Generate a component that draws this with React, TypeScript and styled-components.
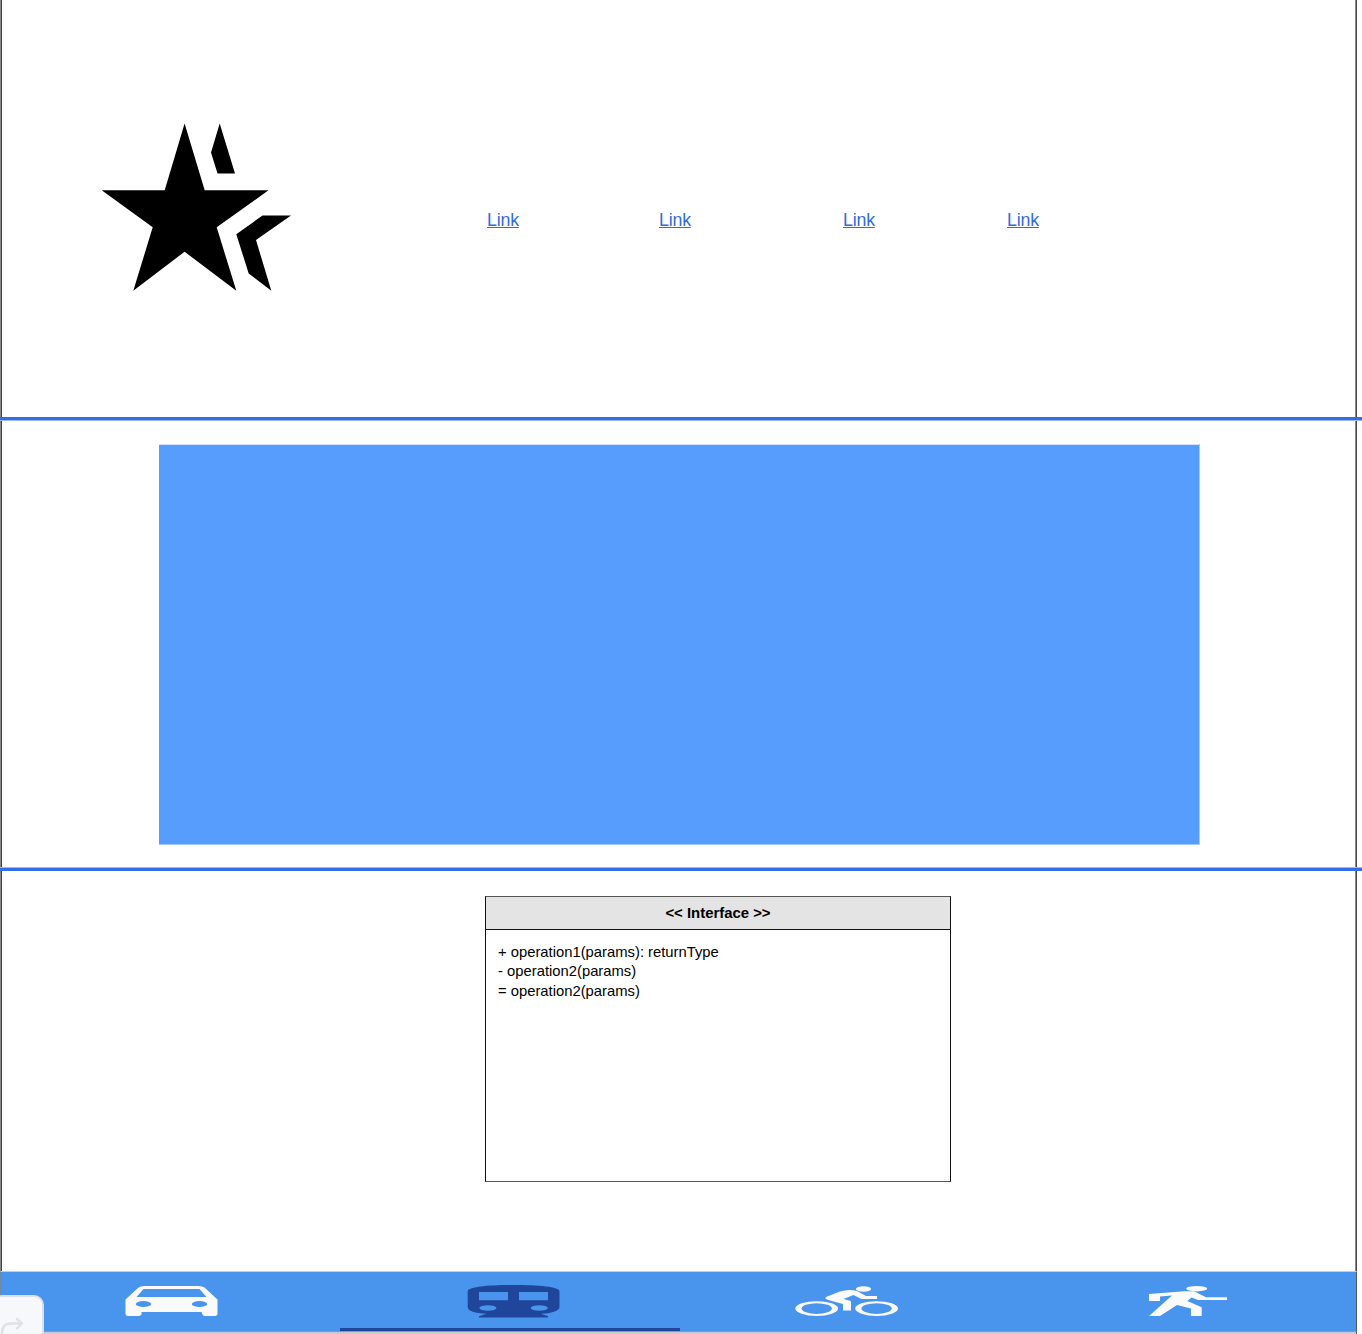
import React from 'react';
import styled, { createGlobalStyle } from 'styled-components';

const Global = createGlobalStyle`
  * { box-sizing: border-box; }
  body { margin: 0; background: #fff; overflow: hidden; }
`;

const Page = styled.div`
  position: relative;
  width: 1362px;
  height: 1334px;
  overflow: hidden;
  display: flex;
  flex-direction: column;
  background: #fff;
  color: #000;
  font-family: 'Liberation Sans', Arial, sans-serif;
`;

const Section = styled.section<{ $height: number }>`
  flex: none;
  display: flex;
  width: 1357px;
  height: ${(p) => p.$height}px;
  box-shadow: inset 1px 0 #888, inset 2px 0 #404040, inset -1px 0 #484848, inset -2px 0 #888;
`;

const Header = styled(Section)`
  align-items: flex-start;
`;

const HeroSection = styled(Section)`
  padding: 23px 0 0 159px;
`;

const DiagramSection = styled(Section)`
  padding: 25px 0 0 485px;
`;

const Rule = styled.div`
  flex: none;
  height: 4px;
  background: linear-gradient(#346de5 0 3px, #9ab9f2 3px 4px);
`;

const SoftRule = styled(Rule)`
  background: linear-gradient(#9ab9f2 0 1px, #346de5 1px 4px);
`;

const Logo = styled.svg`
  flex: none;
  margin: 115px 0 0 90px;
`;

const Nav = styled.nav`
  display: flex;
  margin: 210px 0 0 177px;
`;

const Link = styled.a<{ $gap: number }>`
  width: 32px;
  margin-right: ${(p) => p.$gap}px;
  font-size: 17.8px;
  letter-spacing: -0.2px;
  line-height: 20px;
  color: #2f6bdc;
  text-decoration: underline;
  text-decoration-thickness: 1px;
  text-underline-offset: 1px;
`;

const Hero = styled.div`
  width: 1041px;
  height: 401px;
  background: #579dfd;
  box-shadow: inset -1px 0 #a5cbfe, inset 0 1px #cfe3fe, inset 0 -1px #a5cbfe;
`;

const ClassBox = styled.article`
  width: 466px;
  height: 286px;
  border: 1px solid #111;
  border-top-color: #555;
  border-bottom-color: #555;
`;

const ClassTitle = styled.h2`
  height: 33px;
  margin: 0;
  border-bottom: 1px solid #111;
  background: #e4e4e4;
  text-align: center;
  font-size: 14.9px;
  line-height: 32px;
`;

const Operations = styled.ul`
  list-style: none;
  margin: 0;
  padding: 12.500px 12px;
`;

const Operation = styled.li`
  font-size: 14.8px;
  line-height: 19.6px;
`;

const TabBar = styled.nav`
  flex: none;
  display: grid;
  grid-template-columns: 339px 340px 339px 337px;
  width: 1357px;
  height: 60px;
  background: #4994ec;
  border-top: 1px solid #b5d2f5;
  border-right: 1px solid #48576a;
  border-left: 1px solid #718aa8;
`;

const Tab = styled.button<{ $active?: boolean }>`
  display: flex;
  justify-content: center;
  padding: 8px 0 0;
  border: 0;
  border-bottom: 3px solid ${(p) => (p.$active ? '#1f469b' : 'transparent')};
  background: none;
  color: ${(p) => (p.$active ? '#1f469b' : '#fafafa')};
`;

const Footer = styled.div`
  flex: none;
  width: 1357px;
  height: 3px;
  background: #cbcbcd;
  border-top: 1px solid #8198b5;
  border-right: 1px solid #555;
`;

const RedoPanel = styled.div`
  position: absolute;
  left: -8px;
  bottom: -8px;
  width: 52px;
  height: 47px;
  padding: 20px 0 0 6px;
  border: 2px solid #dcdfe7;
  border-radius: 10px;
  background: #f7f8fb;
`;

const links = [140, 152, 132, 0];

const operations = [
  '+ operation1(params): returnType',
  '- operation2(params)',
  '= operation2(params)',
];

const CarIcon = () => (
  <svg width="110" height="40" viewBox="115.5 1280 110 40" fill="currentColor">
    <path
      fillRule="evenodd"
      d="M125 1299.500L138 1287.500Q140 1286 144 1286H198Q202 1286 204 1287.500L217 1299.500V1314Q217 1316 213 1316H206Q202.500 1316 202 1314.500L201 1312H141V1314Q141 1316 136 1316H129Q125 1316 125 1314ZM143 1289L136 1297H206L199 1289ZM135.300 1304a7.700 3 0 1 0 15.400 0a7.700 3 0 1 0-15.400 0ZM191.300 1304a7.700 3 0 1 0 15.400 0a7.700 3 0 1 0-15.400 0Z"
    />
  </svg>
);

const TrainIcon = () => (
  <svg width="110" height="40" viewBox="455 1280 110 40" fill="currentColor">
    <path
      fillRule="evenodd"
      d="M467.700 1291.500C467.700 1286.500 489 1285 513.500 1285S559.500 1286.500 559.500 1291.500V1307C559.500 1311 551 1313.500 541 1313.700L548 1316.200V1317.500H479V1316.200L486.500 1313.700C475 1313.300 467.700 1311 467.700 1307ZM479 1292V1300.300H508V1292ZM519 1292V1300.300H548V1292ZM479.300 1308a8.600 2.800 0 1 0 17.200 0a8.600 2.800 0 1 0-17.200 0ZM530.700 1308a8.600 2.800 0 1 0 17.200 0a8.600 2.800 0 1 0-17.200 0Z"
    />
  </svg>
);

const BikeIcon = () => (
  <svg width="110" height="40" viewBox="795 1280 110 40" fill="currentColor">
    <path
      fillRule="evenodd"
      d="M795.300 1308.600a21.400 7.400 0 1 0 42.800 0a21.400 7.400 0 1 0-42.800 0ZM801.500 1308.600a15.200 5.300 0 1 0 30.400 0a15.200 5.300 0 1 0-30.400 0ZM855.200 1308.600a21.400 7.400 0 1 0 42.800 0a21.400 7.400 0 1 0-42.800 0ZM861.400 1308.600a15.200 5.300 0 1 0 30.400 0a15.200 5.300 0 1 0-30.400 0Z"
    />
    <ellipse cx="863.5" cy="1289" rx="7.700" ry="2.800" />
    <path d="M827 1296.500L840 1291.600Q849 1288.600 857 1291L866 1296H877V1299H861.500L853.500 1295L843.500 1299L850 1300.700Q851 1301 851 1302V1310.500H843V1304L829 1300.200Q823 1298.500 827 1296.500Z" />
  </svg>
);

const RunnerIcon = () => (
  <svg width="110" height="40" viewBox="1133 1280 110 40" fill="currentColor">
    <ellipse cx="1196.700" cy="1288.700" rx="10.500" ry="2.700" />
    <path d="M1149 1294L1184 1291.300H1194L1206 1297.200H1227V1300H1198L1191.500 1297.500L1187.300 1301L1201.700 1307.200V1316H1191V1308.500L1177 1305L1160 1316H1149L1172 1295.500L1160 1296.500V1301H1149Z" />
  </svg>
);

export default function App() {
  return (
    <Page>
      <Global />
      <Header $height={417}>
        <Logo width="220" height="190" viewBox="90 115 220 190">
          <path d="M184.600 123.500L204.700 190.300H268.500L216.700 227.300L236.300 290.800L184.600 251.700L133.300 290.800L152.700 227.300L101.700 190.300H164.700ZM219.700 123.500L235 173.600H217.500L211 152.500ZM291 215.500L256 240L271.300 290.800L248.700 273.500L236.300 234.300L262.500 215.500Z" />
        </Logo>
        <Nav>
          {links.map((gap, i) => (
            <Link key={i} $gap={gap}>Link</Link>
          ))}
        </Nav>
      </Header>
      <Rule />
      <HeroSection $height={446}>
        <Hero />
      </HeroSection>
      <SoftRule />
      <DiagramSection $height={400}>
        <ClassBox>
          <ClassTitle>&lt;&lt; Interface &gt;&gt;</ClassTitle>
          <Operations>
            {operations.map((text) => (
              <Operation key={text}>{text}</Operation>
            ))}
          </Operations>
        </ClassBox>
      </DiagramSection>
      <TabBar>
        <Tab aria-label="Car"><CarIcon /></Tab>
        <Tab aria-label="Train" $active><TrainIcon /></Tab>
        <Tab aria-label="Bike"><BikeIcon /></Tab>
        <Tab aria-label="Run"><RunnerIcon /></Tab>
      </TabBar>
      <Footer />
      <RedoPanel>
        <svg width="24" height="24" viewBox="0 0 24 24" fill="none" stroke="#dfe1e7" strokeWidth="2.400" strokeLinecap="round" strokeLinejoin="round">
          <path d="M2 19V16Q2 6.500 11 6.500H21.500M17 2L22 6.500L17 11.500" />
        </svg>
      </RedoPanel>
    </Page>
  );
}
